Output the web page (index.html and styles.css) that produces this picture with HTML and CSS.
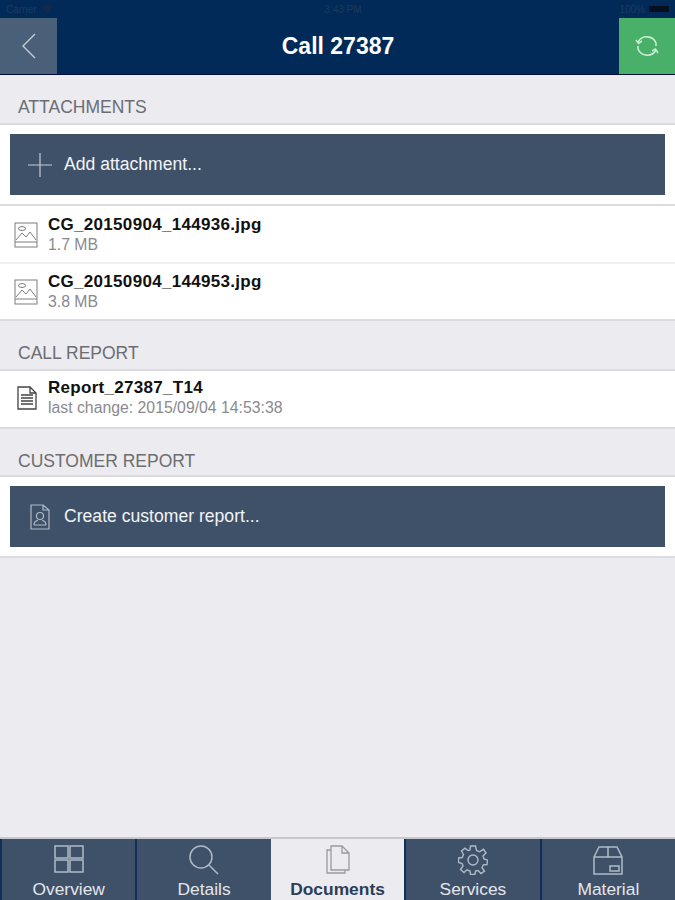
FILE: index.html
```html
<!DOCTYPE html>
<html lang="en">
<head>
  <meta charset="UTF-8">
  <meta name="viewport" content="width=device-width, initial-scale=1.0">
  <title>Call 27387</title>
  <link rel="stylesheet" href="styles.css">
</head>
<body>
  <div class="app">
    <header class="top">
      <div class="status">
        <div class="status-left">
          <span>Carrier</span>
          <svg width="12" height="9" viewBox="0 0 12 9"><path d="M0 2 Q6 -2 12 2 L6 9 Z" fill="#0f2a4c"/></svg>
        </div>
        <span class="status-time">3:43 PM</span>
        <div class="status-right">
          <span>100%</span>
          <span class="battery"></span>
        </div>
      </div>
      <div class="navbar">
        <button class="nav-btn back">
          <svg width="16" height="28" viewBox="0 0 16 28" fill="none" stroke="#c3ccd7" stroke-width="1.4"><path d="M14 2 L2 14 L14 26"/></svg>
        </button>
        <h1>Call 27387</h1>
        <button class="nav-btn sync">
          <svg width="24" height="26" viewBox="0 0 24 26" fill="none" stroke="#c8ecd3" stroke-width="1.6">
            <path d="M3 9 A10 10 0 0 1 21 10 L21 13"/>
            <path d="M1 7 L3.500 10.500 L7 8"/>
            <path d="M21 17 A10 10 0 0 1 3 16 L3 13"/>
            <path d="M23 20 L20.500 16 L17 18"/>
          </svg>
        </button>
      </div>
    </header>

    <main class="content">
      <h2 class="section-title">ATTACHMENTS</h2>
      <section class="panel action-panel">
        <button class="action">
          <svg class="action-icon" width="24" height="24" viewBox="0 0 24 24" stroke="#c3ccd7" stroke-width="1.2"><path d="M0 12 H24 M12 0 V24"/></svg>
          Add attachment...
        </button>
      </section>
      <section class="list">
        <div class="row">
          <svg class="row-icon" width="24" height="26" viewBox="0 0 24 26" fill="none" stroke="#7d7d7d"><rect x="1" y="1" width="22" height="24"/><path d="M1 20 H23 M2 18 L8 11 L12 15 L16 10 L22 18"/><ellipse cx="8" cy="6.500" rx="3.500" ry="2"/></svg>
          <div>
            <div class="row-name">CG_20150904_144936.jpg</div>
            <div class="row-sub">1.7 MB</div>
          </div>
        </div>
        <div class="row">
          <svg class="row-icon" width="24" height="26" viewBox="0 0 24 26" fill="none" stroke="#7d7d7d"><rect x="1" y="1" width="22" height="24"/><path d="M1 20 H23 M2 18 L8 11 L12 15 L16 10 L22 18"/><ellipse cx="8" cy="6.500" rx="3.500" ry="2"/></svg>
          <div>
            <div class="row-name">CG_20150904_144953.jpg</div>
            <div class="row-sub">3.8 MB</div>
          </div>
        </div>
      </section>

      <h2 class="section-title">CALL REPORT</h2>
      <section class="panel list">
        <div class="row">
          <svg class="row-icon doc" width="20" height="24" viewBox="0 0 20 24" fill="none" stroke="#444" stroke-width="1.300"><path d="M1 1 H13 L19 7 V23 H1 Z M13 1 V7 H19"/><path d="M4 9 H16 M4 12 H16 M4 15 H16 M4 18 H16"/></svg>
          <div>
            <div class="row-name">Report_27387_T14</div>
            <div class="row-sub">last change: 2015/09/04 14:53:38</div>
          </div>
        </div>
      </section>

      <h2 class="section-title short">CUSTOMER REPORT</h2>
      <section class="panel action-panel">
        <button class="action">
          <svg class="action-icon report" width="20" height="26" viewBox="0 0 20 26" fill="none" stroke="#aebac8" stroke-width="1.200"><path d="M1 1 H13 L19 6 V25 H1 Z M13 1 V6 H19"/><circle cx="10" cy="12" r="3.500"/><path d="M4 21 Q4 17 8 16.500 M16 21 Q16 17 12 16.500 M4 21 H16"/></svg>
          Create customer report...
        </button>
      </section>
    </main>

    <nav class="tabs">
      <div class="tab">
        <svg width="30" height="28" viewBox="0 0 30 28" fill="none" stroke="#aebac8" stroke-width="1.500"><rect x="1" y="1" width="13" height="12"/><rect x="16" y="1" width="13" height="12"/><rect x="1" y="15" width="13" height="12"/><rect x="16" y="15" width="13" height="12"/></svg>
        <span>Overview</span>
      </div>
      <div class="tab">
        <svg width="30" height="30" viewBox="0 0 30 30" fill="none" stroke="#aebac8" stroke-width="1.500"><circle cx="12" cy="12" r="11"/><path d="M20 20 L29 29"/></svg>
        <span>Details</span>
      </div>
      <div class="tab active">
        <svg width="24" height="29" viewBox="0 0 24 29" fill="none" stroke="#9a9a9e" stroke-width="1.300"><path d="M5 1 H16 L23 8 V25 H5 Z M16 1 V8 H23"/><path d="M5 5 H1 V28 H19 V25"/></svg>
        <span>Documents</span>
      </div>
      <div class="tab">
        <svg width="30" height="30" viewBox="0 0 30 30" fill="none" stroke="#aebac8" stroke-width="1.400"><circle cx="15" cy="15" r="5"/><path d="M12.500 1 H17.500 L18.500 5.500 L21.500 6.800 L25.500 4.300 L28 8 L25 11 L26 14 L29.500 15 L29 19.500 L25.300 19.800 L24 22.800 L26.500 26 L23 28.500 L20 25.500 L17.500 26 L17 29.500 H12.500 L12 26 L9 24.800 L6 27.500 L2.500 24.500 L5 21 L4 18.500 L.500 17.500 V13 L4.200 12.500 L5.500 9.500 L3.500 6 L7 3.200 L10 5.500 L12 5 Z"/></svg>
        <span>Services</span>
      </div>
      <div class="tab">
        <svg width="30" height="30" viewBox="0 0 30 30" fill="none" stroke="#aebac8" stroke-width="1.500"><path d="M1 12 L6 2 H24 L29 12 V29 H1 Z M1 12 H29 M15 2 V12"/><rect x="17" y="21" width="9" height="5"/></svg>
        <span>Material</span>
      </div>
    </nav>
  </div>
</body>
</html>
```

FILE: styles.css
```css
* {
  box-sizing: border-box;
}

body {
  margin: 0;
  font-family: 'Liberation Sans', Arial, sans-serif;
  background-color: #ebebf0;
}

.app {
  display: flex;
  flex-direction: column;
  height: 900px;
  overflow: hidden;
}

/* Top bar */
.top {
  background-color: #012a58;
  border-bottom: 1px solid #000d3a;
}

.status {
  display: flex;
  justify-content: space-between;
  align-items: center;
  height: 18px;
  padding: 0 6px;
  font-size: 10px;
  color: #1d3a5f;
}

.status-left, .status-right {
  display: flex;
  align-items: center;
  gap: 4px;
}

.status-time {
  margin-left: 14px;
}

.battery {
  width: 20px;
  height: 6px;
  background-color: #050f1e;
}

.navbar {
  display: flex;
  justify-content: space-between;
  align-items: center;
  height: 56px;
}

.nav-btn {
  display: flex;
  align-items: center;
  justify-content: center;
  height: 100%;
  padding: 0;
  border: none;
}

.back {
  width: 57px;
  background-color: #4a5f78;
}

.sync {
  width: 56px;
  background-color: #48b068;
}

.navbar h1 {
  margin: 0;
  font-size: 23px;
  font-weight: bold;
  color: #ffffff;
}

/* Sections */
.content {
  flex: 1;
}

.section-title {
  margin: 0;
  height: 48px;
  padding: 22px 18px 0;
  font-size: 17.500px;
  font-weight: normal;
  line-height: 20px;
  color: #6d6d72;
}

.section-title.short {
  height: 46px;
}

.panel {
  background-color: #ffffff;
  border-top: 2px solid #dcdce0;
}

.action-panel {
  padding: 9px 10px;
  border-bottom: 2px solid #dcdce0;
}

.action {
  display: flex;
  align-items: center;
  width: 100%;
  height: 61px;
  padding: 0 0 0 18px;
  background-color: #3f5169;
  border: none;
  font-family: inherit;
  font-size: 17.600px;
  color: #f2f4f7;
}

.action-icon {
  margin-right: 12px;
}

.action-icon.report {
  margin-left: 2px;
  margin-right: 14px;
}

.list {
  background-color: #ffffff;
  border-bottom: 2px solid #dcdce0;
}

.row {
  display: flex;
  align-items: center;
  height: 56px;
  padding: 1px 0 0 14px;
}

.row + .row {
  height: 57px;
  border-top: 2px solid #f0f0f3;
}

.panel .row {
  padding: 0 0 2px 14px;
}

.row-icon {
  margin-right: 10px;
  flex-shrink: 0;
}

.row-icon.doc {
  margin-left: 3px;
  margin-right: 11px;
}

.row-name {
  font-size: 17px;
  font-weight: bold;
  line-height: 20px;
  letter-spacing: 0.300px;
  color: #111111;
}

.row-sub {
  font-size: 15.800px;
  line-height: 20px;
  color: #8a8a8e;
}

/* Tab bar */
.tabs {
  display: flex;
  height: 63px;
  background-color: #012a58;
  border-top: 2px solid #c6c8cd;
}

.tab {
  flex: 1;
  display: flex;
  flex-direction: column;
  align-items: center;
  justify-content: space-between;
  padding: 6px 0 1px;
  background-color: #3f5169;
  border-left: 2px solid #0f2f58;
  font-size: 17.400px;
  line-height: 19px;
  color: #e3e7ec;
  overflow: hidden;
}

.tab.active {
  background-color: #ebebf0;
  border-left: none;
  font-weight: bold;
  color: #2f3d55;
}
```
